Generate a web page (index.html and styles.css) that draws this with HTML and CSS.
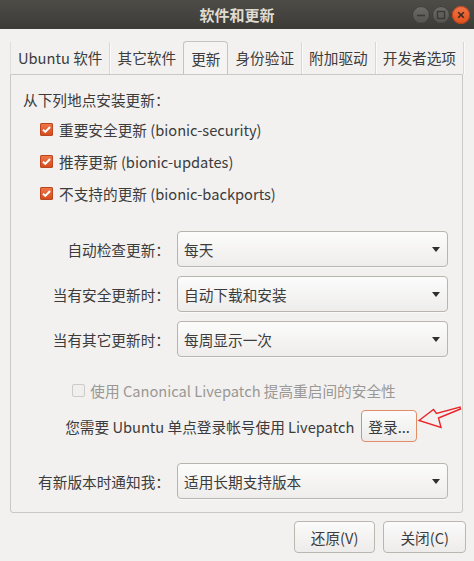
FILE: index.html
```html
<!DOCTYPE html>
<html lang="zh-CN">
<head>
<meta charset="utf-8">
<title>软件和更新</title>
<link rel="stylesheet" href="styles.css">
</head>
<body>
<div class="window">
  <header class="titlebar">
    <div class="spacer"></div>
    <div class="title">软件和更新</div>
    <div class="controls">
      <span class="wbtn"><svg width="18" height="18" viewBox="0 0 18 18"><path d="M5 9.5h8" stroke="#3a3935" stroke-width="1.6"/></svg></span>
      <span class="wbtn"><svg width="18" height="18" viewBox="0 0 18 18"><rect x="5.5" y="5.5" width="7" height="7" fill="none" stroke="#3a3935" stroke-width="1.4"/></svg></span>
      <span class="wbtn close"><svg width="18" height="18" viewBox="0 0 18 18"><path d="M6.2 6.2l5.6 5.6M11.8 6.2l-5.6 5.6" stroke="#3a2a20" stroke-width="1.6"/></svg></span>
    </div>
  </header>

  <nav class="tabs">
    <div class="tab first">Ubuntu 软件</div>
    <div class="tab">其它软件</div>
    <div class="tab active">更新</div>
    <div class="tab">身份验证</div>
    <div class="tab">附加驱动</div>
    <div class="tab">开发者选项</div>
  </nav>

  <section class="panel">
    <div class="heading">从下列地点安装更新：</div>
    <div class="checklist">
      <div class="check-row"><span class="cb checked"><svg width="13" height="13" viewBox="0 0 13 13"><path d="M3 6.6l2.3 2.3L10 4" fill="none" stroke="#fff" stroke-width="2"/></svg></span>重要安全更新 (bionic-security)</div>
      <div class="check-row"><span class="cb checked"><svg width="13" height="13" viewBox="0 0 13 13"><path d="M3 6.6l2.3 2.3L10 4" fill="none" stroke="#fff" stroke-width="2"/></svg></span>推荐更新 (bionic-updates)</div>
      <div class="check-row"><span class="cb checked"><svg width="13" height="13" viewBox="0 0 13 13"><path d="M3 6.6l2.3 2.3L10 4" fill="none" stroke="#fff" stroke-width="2"/></svg></span>不支持的更新 (bionic-backports)</div>
    </div>

    <div class="form-grid">
      <span class="lbl">自动检查更新：</span>
      <div class="combo"><span>每天</span><span class="arrow"></span></div>
      <span class="lbl">当有安全更新时：</span>
      <div class="combo"><span>自动下载和安装</span><span class="arrow"></span></div>
      <span class="lbl">当有其它更新时：</span>
      <div class="combo"><span>每周显示一次</span><span class="arrow"></span></div>
    </div>

    <div class="center-row disabled"><span class="cb off"></span>使用 Canonical Livepatch 提高重启间的安全性</div>

    <div class="center-row login">
      <span>您需要 Ubuntu 单点登录帐号使用 Livepatch</span>
      <button class="btn focus">登录...</button>
      <svg class="annot" width="52" height="32" viewBox="0 0 52 32"><path d="M5 18.5L19.5 7.5L22.5 11.5L46 5L46.5 7L24.5 16L27 25.5Z" fill="none" stroke="#e8262a" stroke-width="1.4" stroke-linejoin="miter"/></svg>
    </div>

    <div class="form-grid last">
      <span class="lbl">有新版本时通知我：</span>
      <div class="combo"><span>适用长期支持版本</span><span class="arrow"></span></div>
    </div>
  </section>

  <footer class="actions">
    <button class="btn">还原(V)</button>
    <button class="btn">关闭(C)</button>
  </footer>
</div>
</body>
</html>
```

FILE: styles.css
```css
* { box-sizing: border-box; }

html, body {
  margin: 0;
  padding: 0;
}

body {
  width: 474px;
  height: 561px;
  overflow: hidden;
  background: #f2f1f0;
  font-family: "Noto Sans CJK SC", "Noto Sans", sans-serif;
  font-size: 14.67px;
  color: #3c3c3c;
}

.window {
  display: flex;
  flex-direction: column;
  height: 561px;
}

/* title bar */
.titlebar {
  height: 29px;
  flex: none;
  display: grid;
  grid-template-columns: 1fr auto 1fr;
  align-items: center;
  background: linear-gradient(#4d4c47, #3c3b37);
  color: #dfdbd2;
}

.title {
  font-size: 15px;
  font-weight: bold;
  line-height: 29px;
}

.controls {
  justify-self: end;
  display: flex;
  gap: 2px;
  padding-right: 4px;
}

.wbtn {
  width: 18px;
  height: 18px;
  border-radius: 50%;
  background: linear-gradient(#6d6c67, #53524d);
  box-shadow: inset 0 0 0 1px #3a3935;
  display: flex;
}

.wbtn.close {
  background: linear-gradient(#f37449, #e0501c);
  box-shadow: inset 0 0 0 1px #b8441a;
}

/* tabs */
.tabs {
  flex: none;
  display: flex;
  align-items: flex-end;
  height: 33px;
  margin-top: 12px;
  padding: 0 10px;
}

.tab {
  height: 32px;
  line-height: 31px;
  padding: 0 7px;
  border-right: 1px solid #d9d7d3;
  box-shadow: 1px 0 0 #fbfafa;
  white-space: nowrap;
}

.tab.first {
  border-left: 1px solid #e0deda;
}

.tab.active {
  height: 33px;
  line-height: 33px;
  background: #f5f4f3;
  border: 1px solid #c6c4bf;
  border-bottom: none;
  border-radius: 4px 4px 0 0;
  box-shadow: none;
  margin-left: -1px;
}

/* panel */
.panel {
  flex: none;
  position: relative;
  margin: 0 11px 0 10px;
  height: 439px;
  border: 1px solid #cac8c3;
  border-radius: 0 0 3px 3px;
  padding: 13px 14px 13px 12px;
  display: flex;
  flex-direction: column;
}

.heading {
  height: 24px;
  line-height: 24px;
}

.checklist {
  margin-top: 1px;
  margin-left: 17px;
  display: flex;
  flex-direction: column;
}

.check-row {
  height: 32px;
  display: flex;
  align-items: center;
  gap: 6px;
  white-space: nowrap;
}

.cb {
  width: 13px;
  height: 13px;
  flex: none;
  border-radius: 2px;
  display: flex;
}

.cb.checked {
  background: linear-gradient(#ef7a4c, #d4491a);
  box-shadow: inset 0 0 0 1px #b9461e;
}

.cb.off {
  background: #f0efee;
  border: 1px solid #cdcbc7;
}

/* form grid */
.form-grid {
  margin-top: 22px;
  display: grid;
  grid-template-columns: 147px 1fr;
  column-gap: 7px;
  row-gap: 9px;
}

.form-grid.last {
  margin-top: 21px;
}

.lbl {
  text-align: right;
  align-self: center;
  white-space: nowrap;
}

.combo {
  height: 36px;
  border: 1px solid #b8b5af;
  border-radius: 4px;
  background: linear-gradient(#fcfcfc, #eeedeb);
  display: flex;
  align-items: center;
  justify-content: space-between;
  padding: 0 7px 0 6px;
  box-shadow: 0 1px 0 rgba(255,255,255,0.6);
}

.arrow {
  width: 0;
  height: 0;
  border-left: 4.5px solid transparent;
  border-right: 4.5px solid transparent;
  border-top: 5px solid #2f2f2f;
}

/* livepatch */
.center-row {
  display: flex;
  align-items: center;
  justify-content: center;
  white-space: nowrap;
}

.center-row.disabled {
  margin-top: 21px;
  height: 24px;
  gap: 5px;
  padding-right: 3px;
  color: #9a9894;
}

.center-row.login {
  position: relative;
  margin-top: 8px;
  height: 32px;
  gap: 7px;
  padding-left: 11px;
}

.btn {
  font: inherit;
  color: #3c3c3c;
  height: 32px;
  padding: 0 16px;
  border: 1px solid #bab7b1;
  border-radius: 4px;
  background: linear-gradient(#fbfbfb, #edecea);
}

.btn.focus {
  padding: 0 6px;
  border-color: #e28d66;
}

.annot {
  position: absolute;
  left: 391px;
  top: -8px;
}

/* footer */
.actions {
  flex: none;
  display: flex;
  justify-content: flex-end;
  gap: 8px;
  padding: 8px 8px 0 0;
}
```
